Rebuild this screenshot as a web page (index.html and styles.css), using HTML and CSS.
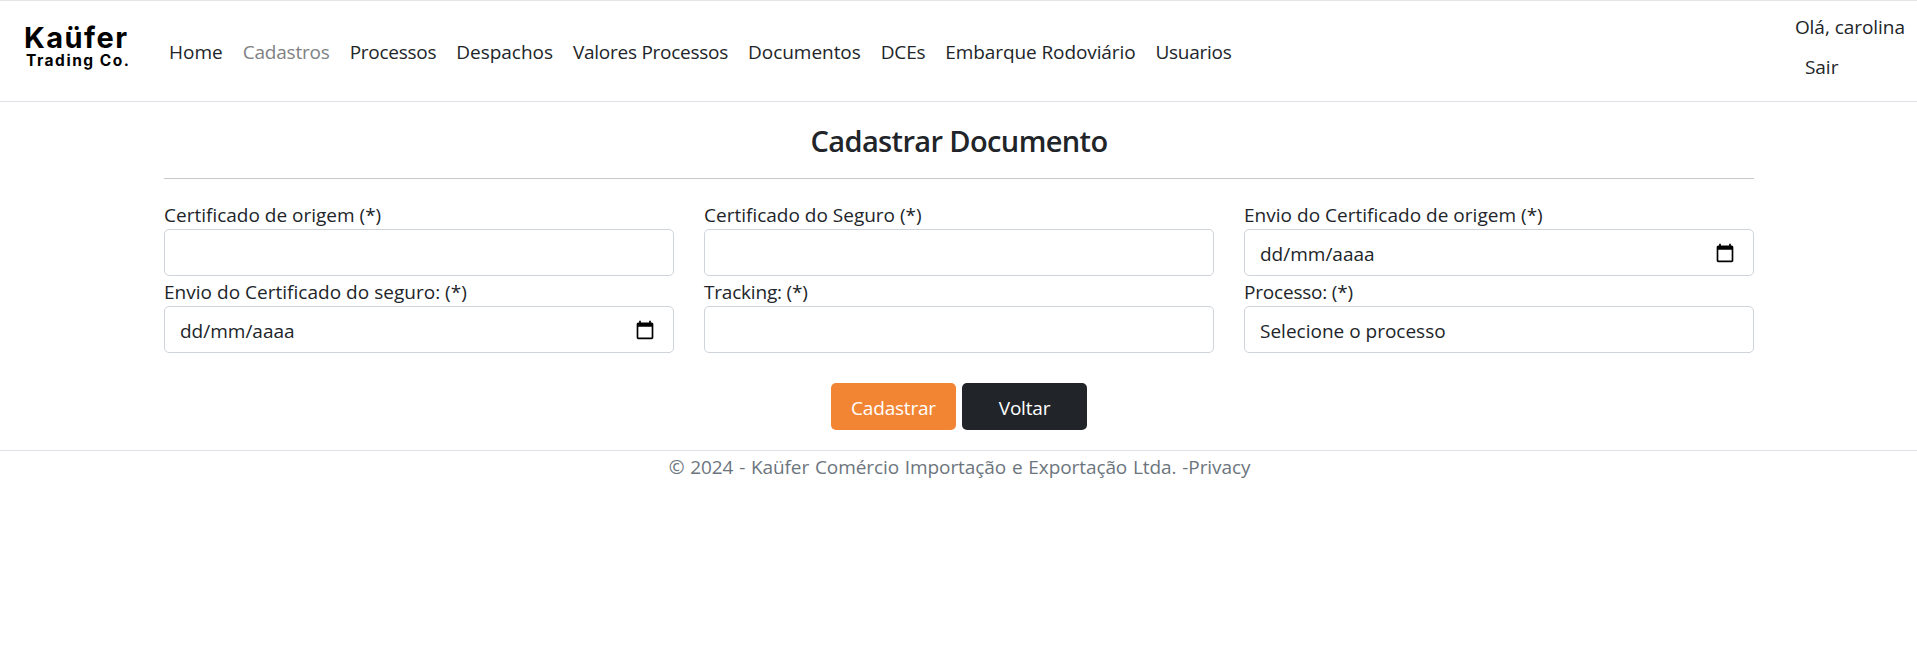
FILE: index.html
```html
<!DOCTYPE html>
<html lang="pt-br">
<head>
<meta charset="utf-8">
<title>Cadastrar Documento</title>
<link rel="stylesheet" href="styles.css">
</head>
<body>
<header class="topbar">
  <a class="brand">
    <svg class="logo" viewBox="0 0 110 50" role="img" aria-label="Kaüfer Trading Co.">
      <text class="logo-name" x="2" y="28" textLength="103">Kaüfer</text>
      <text class="logo-sub" x="4" y="46" textLength="103">Trading Co.</text>
    </svg>
  </a>
  <nav class="menu">
    <a>Home</a>
    <a class="muted tight">Cadastros</a>
    <a class="tighter">Processos</a>
    <a class="snug">Despachos</a>
    <a class="tighter">Valores Processos</a>
    <a class="snug">Documentos</a>
    <a class="tight">DCEs</a>
    <a class="close">Embarque Rodoviário</a>
    <a class="tighter">Usuarios</a>
  </nav>
  <div class="account">
    <span class="snug">Olá, carolina</span>
    <a class="logout">Sair</a>
  </div>
</header>

<main class="content">
  <h1 class="title">Cadastrar Documento</h1>
  <form class="fields">
    <div class="field">
      <label>Certificado de origem (*)</label>
      <div class="control"></div>
    </div>
    <div class="field">
      <label>Certificado do Seguro (*)</label>
      <div class="control"></div>
    </div>
    <div class="field">
      <label class="wide">Envio do Certificado de origem (*)</label>
      <div class="control"><span>dd/mm/aaaa</span>
        <svg class="calendar" viewBox="0 0 24 24"><path d="M20 3h-1V1h-2v2H7V1H5v2H4c-1.1 0-2 .9-2 2v16c0 1.1.9 2 2 2h16c1.1 0 2-.9 2-2V5c0-1.1-.9-2-2-2zm0 18H4V8h16v13z"/></svg>
      </div>
    </div>
    <div class="field">
      <label class="wide">Envio do Certificado do seguro: (*)</label>
      <div class="control"><span>dd/mm/aaaa</span>
        <svg class="calendar" viewBox="0 0 24 24"><path d="M20 3h-1V1h-2v2H7V1H5v2H4c-1.1 0-2 .9-2 2v16c0 1.1.9 2 2 2h16c1.1 0 2-.9 2-2V5c0-1.1-.9-2-2-2zm0 18H4V8h16v13z"/></svg>
      </div>
    </div>
    <div class="field">
      <label class="tight">Tracking: (*)</label>
      <div class="control"></div>
    </div>
    <div class="field">
      <label class="tight">Processo: (*)</label>
      <div class="control"><span>Selecione o processo</span></div>
    </div>
  </form>
  <div class="actions">
    <button class="btn btn-primary">Cadastrar</button>
    <button class="btn btn-dark">Voltar</button>
  </div>
</main>

<footer class="footer">© 2024 - Kaüfer Comércio Importação e Exportação Ltda. -<a>Privacy</a></footer>
</body>
</html>
```

FILE: styles.css
```css
* { box-sizing: border-box; }

body {
  margin: 0;
  background: #fff;
  color: #212529;
  font: 19px/30px "Open Sans", "Noto Sans", sans-serif;
}

.topbar {
  display: flex;
  height: 102px;
  border-top: 1px solid #e8e4e1;
  border-bottom: 1px solid #dee2e6;
}

.brand { margin: 19px 0 0 22px; }
.logo { display: block; width: 110px; height: 50px; fill: #000; }
.logo-name { font: 700 29px Inter, sans-serif; }
.logo-sub { font: 700 15.5px Inter, sans-serif; }

.menu { display: flex; gap: 20px; margin: 36px 0 0 37px; white-space: nowrap; }
.muted { color: #7f8183; }

.snug { letter-spacing: -0.04px; }
.close { letter-spacing: -0.1px; }
.tight { letter-spacing: -0.2px; }
.tighter { letter-spacing: -0.26px; }
.wide { letter-spacing: 0.02px; }

.account {
  display: flex;
  flex-direction: column;
  gap: 10px;
  margin: 11px 12px 0 auto;
}
.logout { padding-left: 10px; }

.content { margin: 0 163px 0 164px; }

.title {
  margin: 0;
  height: 77px;
  padding-top: 21px;
  border-bottom: 1px solid #c7c8c9;
  font-size: 29px;
  font-weight: 600;
  line-height: 36px;
  letter-spacing: -0.62px;
  text-align: center;
}

.fields {
  display: grid;
  grid-template-columns: repeat(3, 1fr);
  column-gap: 30px;
  padding-top: 20px;
}
.field label { display: block; height: 30px; padding-top: 1px; }
.control {
  display: flex;
  align-items: center;
  justify-content: space-between;
  height: 47px;
  padding: 0 18px 0 15px;
  border: 1px solid #ced4da;
  border-radius: 5px;
}
.control span { padding-top: 2px; }
.calendar { width: 20px; height: 20px; fill: #000; }

.actions { display: flex; justify-content: center; gap: 6px; padding: 30px 0 20px; }
.btn {
  width: 125px;
  height: 47px;
  padding: 2px 0 0;
  border: 0;
  border-radius: 5px;
  color: #fff;
  font: inherit;
  letter-spacing: -0.2px;
}
.btn-primary { background: #f28533; }
.btn-dark { background: #212529; }

.footer {
  border-top: 1px solid #dee2e6;
  padding: 1px 0 0 2px;
  color: #6c757d;
  letter-spacing: -0.09px;
  word-spacing: 1px;
  text-align: center;
}
```
